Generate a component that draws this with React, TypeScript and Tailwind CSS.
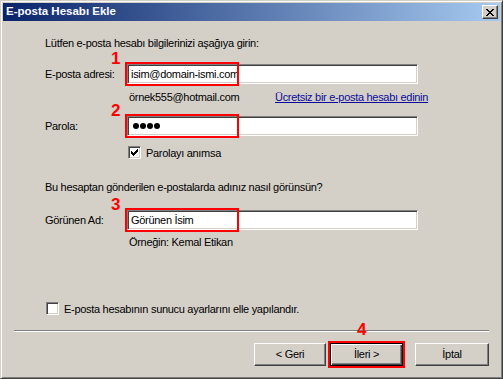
import type { ReactNode } from 'react';

const FONT = { fontFamily: '"Liberation Sans", Arial, sans-serif' };

function Sunken({ children, className = '' }: { children?: ReactNode; className?: string }) {
  return (
    <div
      className={
        'border border-t-[#808080] border-l-[#808080] border-r-white border-b-white shadow-[inset_1px_1px_0_#404040,inset_-1px_-1px_0_#d4d0c8] ' +
        className
      }
    >
      {children}
    </div>
  );
}

function Marker({ n, className = '' }: { n: string; className?: string }) {
  return (
    <span className={'absolute text-[17px] font-bold leading-none tracking-normal text-[#f00] ' + className}>{n}</span>
  );
}

function Field({ value, n, children }: { value?: string; n: string; children?: ReactNode }) {
  return (
    <div className="relative">
      <Sunken className="w-[291px] h-[20px] bg-white flex items-center pl-[3px]">
        {children ?? <span className="text-[11px] text-black">{value}</span>}
      </Sunken>
      <div className="absolute -left-[2px] -top-[2px] w-[114px] h-[24px] border-2 border-[#f00]" />
      <Marker n={n} className="-left-[16px] -top-[14px]" />
    </div>
  );
}

function CheckBox({ checked }: { checked?: boolean }) {
  return (
    <Sunken className="w-[13px] h-[13px] bg-white flex items-center justify-center">
      {checked && (
        <svg width="7" height="7" viewBox="0 0 7 7" shapeRendering="crispEdges">
          <path d="M0 2h1v3H0zM1 3h1v3H1zM2 4h1v3H2zM3 3h1v3H3zM4 2h1v3H4zM5 1h1v3H5zM6 0h1v3H6z" fill="#000" />
        </svg>
      )}
    </Sunken>
  );
}

function Button({ label, w, isDefault }: { label: string; w: string; isDefault?: boolean }) {
  return (
    <div
      className={
        'h-[23px] flex items-center justify-center text-[11px] text-black border ' +
        (isDefault
          ? 'border-black shadow-[inset_1px_1px_0_#fff,inset_-1px_-1px_0_#404040,inset_-2px_-2px_0_#808080] '
          : 'border-t-white border-l-white border-r-[#404040] border-b-[#404040] shadow-[inset_-1px_-1px_0_#808080] ') +
        w
      }
    >
      {label}
    </div>
  );
}

export default function App() {
  return (
    <div className="w-[503px] h-[379px] bg-[#d4d0c8] text-black" style={FONT}>
      <div className="w-full h-full p-[2px] border border-t-[#d4d0c8] border-l-[#d4d0c8] border-r-[#404040] border-b-[#404040] shadow-[inset_1px_1px_0_#fff,inset_-1px_-1px_0_#808080] flex flex-col tracking-[-0.3px]">
        {/* title bar */}
        <div className="h-[18px] flex items-center justify-between pl-[3px] pr-[2px] bg-[linear-gradient(to_right,#0a246a,#a6caf0)]">
          <span className="text-[11.5px] font-bold text-white tracking-normal">E-posta Hesabı Ekle</span>
          <div className="w-[16px] h-[14px] flex items-center justify-center border border-t-white border-l-white border-r-[#404040] border-b-[#404040] shadow-[inset_-1px_-1px_0_#808080] bg-[#d4d0c8]">
            <svg width="8" height="7" viewBox="0 0 8 7" shapeRendering="crispEdges">
              <path
                d="M0 0h2v1H0zM6 0h2v1H6zM1 1h2v1H1zM5 1h2v1H5zM2 2h4v1H2zM3 3h2v1H3zM2 4h4v1H2zM1 5h2v1H1zM5 5h2v1H5zM0 6h2v1H0zM6 6h2v1H6z"
                fill="#000"
              />
            </svg>
          </div>
        </div>

        {/* body */}
        <div className="flex flex-col pl-[42px] text-[11px] leading-[14px]">
          <div className="mt-[15px] h-[14px]">Lütfen e-posta hesabı bilgilerinizi aşağıya girin:</div>

          <div className="mt-[14px] flex items-center h-[20px]">
            <span className="w-[82px]">E-posta adresi:</span>
            <Field value="isim@domain-ismi.com" n="1" />
          </div>

          <div className="mt-[6px] h-[14px] flex">
            <span className="ml-[84px] w-[146px]">örnek555@hotmail.com</span>
            <span className="text-[#0b0b9c] underline">Ücretsiz bir e-posta hesabı edinin</span>
          </div>

          <div className="mt-[12px] flex items-center h-[20px]">
            <span className="w-[82px]">Parola:</span>
            <Field n="2">
              <div className="flex gap-[1px] pl-[2px]">
                <span className="w-[6px] h-[6px] rounded-full bg-black" />
                <span className="w-[6px] h-[6px] rounded-full bg-black" />
                <span className="w-[6px] h-[6px] rounded-full bg-black" />
                <span className="w-[6px] h-[6px] rounded-full bg-black" />
              </div>
            </Field>
          </div>

          <div className="mt-[10px] ml-[83px] flex items-center gap-[5px] h-[13px]">
            <CheckBox checked />
            <span>Parolayı anımsa</span>
          </div>

          <div className="mt-[21px] h-[14px]">Bu hesaptan gönderilen e-postalarda adınız nasıl görünsün?</div>

          <div className="mt-[16px] flex items-center h-[20px]">
            <span className="w-[82px]">Görünen Ad:</span>
            <Field value="Görünen İsim" n="3" />
          </div>

          <div className="mt-[5px] ml-[84px] h-[14px]">Örneğin: Kemal Etikan</div>

          <div className="mt-[53px] ml-px flex items-center gap-[5px] h-[13px]">
            <CheckBox />
            <span>E-posta hesabının sunucu ayarlarını elle yapılandır.</span>
          </div>
        </div>

        {/* separator */}
        <div className="mt-[15px] mx-[11px] border-t border-t-[#808080] border-b border-b-white" />

        {/* buttons */}
        <div className="mt-[11px] flex justify-end pr-[11px]">
          <Button label="< Geri" w="w-[72px]" />
          <div className="relative ml-[4px]">
            <Button label="İleri >" w="w-[73px]" isDefault />
            <div className="absolute -left-[2px] -top-[2px] -right-[2px] -bottom-[2px] border-2 border-[#f00]" />
            <Marker n="4" className="left-[27px] -top-[22px]" />
          </div>
          <div className="ml-[12px]">
            <Button label="İptal" w="w-[74px]" />
          </div>
        </div>
      </div>
    </div>
  );
}
